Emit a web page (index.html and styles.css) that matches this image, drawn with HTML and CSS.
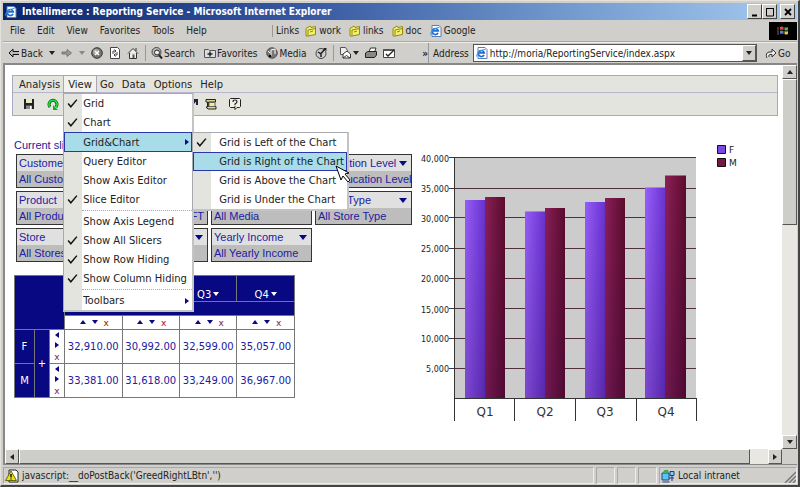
FILE: index.html
```html
<!DOCTYPE html>
<html lang="en">
<head>
<meta charset="utf-8">
<title>Intellimerce : Reporting Service</title>
<link rel="stylesheet" href="styles.css">
</head>
<body>
<svg class="defs" aria-hidden="true">
  <symbol id="ie" viewBox="0 0 12 12"><path d="M2 .5h7l2 2v9H2z" fill="#fff" stroke="#5a7cb8"/><path d="M8 7.800A3 3 0 1 1 8.200 5.800H3" fill="none" stroke="#1c6fd0" stroke-width="1.700"/><path d="M.5 9.500C0 7 6 2 9.500 2.500" fill="none" stroke="#3b9be8"/></symbol>
  <symbol id="folder" viewBox="0 0 12 12"><path d="M1 3.500L5 1l1 1.500L10.500 1.500v8L3 11H1z" fill="#f4ee70" stroke="#8c8a10"/><path d="M3 10.500V5l7.500-1.500M5 7l3-1" fill="none" stroke="#8c8a10"/></symbol>
  <symbol id="check" viewBox="0 0 10 10"><path d="M1 5l2.500 3L9 1.500" fill="none" stroke="#111" stroke-width="1.300"/></symbol>
</svg>
<div class="window">
  <header class="titlebar">
    <svg class="ico"><use href="#ie"/></svg>
    <h1>Intellimerce : Reporting Service - Microsoft Internet Explorer</h1>
    <button class="cap" aria-label="Minimize"><svg viewBox="0 0 10 10"><path d="M2 8.500h5" stroke="#000" stroke-width="2"/></svg></button>
    <button class="cap" aria-label="Maximize"><svg viewBox="0 0 10 10"><path d="M1 1.500h8M1.500 1v8h7V1" fill="none" stroke="#000"/></svg></button>
    <button class="cap close" aria-label="Close"><svg viewBox="0 0 10 10"><path d="M2 2l6 6M8 2L2 8" stroke="#000" stroke-width="1.800"/></svg></button>
  </header>

  <div class="row menus">
    <nav class="appmenu">
      <button>File</button><button>Edit</button><button>View</button><button>Favorites</button><button>Tools</button><button>Help</button>
    </nav>
    <nav class="links">
      <span>Links</span>
      <a href="#work"><svg class="ico"><use href="#folder"/></svg>work</a>
      <a href="#links"><svg class="ico"><use href="#folder"/></svg>links</a>
      <a href="#doc"><svg class="ico"><use href="#folder"/></svg>doc</a>
      <a href="#google"><svg class="ico"><use href="#ie"/></svg>Google</a>
    </nav>
    <div class="flag"><svg viewBox="0 0 14 12"><path d="M4 2q2-1 3.500 0v3Q6 4 4 5z" fill="#d8543c"/><path d="M8.500 2q2 1 3.500 0v3q-2 1-3.500 0z" fill="#5fae4a"/><path d="M4 6q2-1 3.500 0v3Q6 8 4 9z" fill="#4b83d8"/><path d="M8.500 6q2 1 3.500 0v3q-2 1-3.500 0z" fill="#e8c53c"/><path d="M1 3h2M1 5h2M1 7h2M1 9h2" stroke="#8a5a50"/></svg></div>
  </div>

  <div class="row tools">
    <div class="navtools">
      <button><svg class="ico" viewBox="0 0 12 12"><path d="M11 4.500H5V2L1 6l4 4V7.500h6" fill="#bbb" stroke="#111"/></svg>Back</button>
      <button class="drop" aria-label="Back history"><i class="caret"></i></button>
      <button class="drop" aria-label="Forward"><svg class="ico" viewBox="0 0 12 12"><path d="M1 5h5V2.500L10.500 6 6 9.500V7H1z" fill="#999" stroke="#777"/></svg></button>
      <button class="drop" aria-label="Forward history"><i class="caret dim"></i></button>
      <button aria-label="Stop"><svg class="ico" viewBox="0 0 12 12"><circle cx="6" cy="6" r="5.300" fill="#777" stroke="#333"/><circle cx="5" cy="5" r="3" fill="#aaa"/><path d="M4 4l4 4M8 4L4 8" stroke="#fff" stroke-width="1.300"/></svg></button>
      <button aria-label="Refresh"><svg class="ico" viewBox="0 0 12 12"><path d="M1.500.5h7l2 2v9h-9z" fill="#fff" stroke="#444"/><path d="M4 7V4h3M5.500 2.500L7 4 5.500 5.500M8 5v3H5M6.500 6.500L5 8l1.500 1.500" fill="none" stroke="#444"/></svg></button>
      <button aria-label="Home"><svg class="ico" viewBox="0 0 12 12"><path d="M1 6.500L6 1.500l5 5M9 4V1M2.500 6v5.500h7V6" fill="#eee" stroke="#333"/><path d="M5.500 11V7.500h2V11z" fill="#555"/></svg></button>
    </div>
    <div class="exptools">
      <button><svg class="ico" viewBox="0 0 12 12"><circle cx="5.500" cy="5" r="4.500" fill="#bbb" stroke="#444"/><circle cx="6" cy="5.500" r="2.500" fill="#eee" stroke="#222"/><path d="M8 8l3 3.500" stroke="#222" stroke-width="2"/></svg>Search</button>
      <button><svg class="ico" viewBox="0 0 12 12"><path d="M.5 10.500v-8h4l1 1h6v7z" fill="#ddd" stroke="#555"/><path d="M6 4.500v5M3.500 7h5" stroke="#222" stroke-width="1.500"/></svg>Favorites</button>
      <button><svg class="ico" viewBox="0 0 12 12"><circle cx="6" cy="6" r="5.300" fill="#777" stroke="#555"/><path d="M5 9V3l4-1v5M2 4l2 2" fill="none" stroke="#fff"/><circle cx="4" cy="9" r="1.300"/></svg>Media</button>
      <button aria-label="History"><svg class="ico" viewBox="0 0 12 12"><circle cx="6" cy="6.500" r="5" fill="#ccc" stroke="#444"/><path d="M6 6.500l4-4.500M3 5l3 2v3" fill="none" stroke="#222" stroke-width="1.500"/><path d="M8 1h3.500v3z" fill="#222"/></svg></button>
    </div>
    <div class="doctools">
      <button aria-label="Mail"><svg class="ico" viewBox="0 0 12 12"><path d="M1.500.5h5l2 3v4h-7z" fill="#eee" stroke="#555"/><path d="M4 7l4-3 3.500 3v4H4zM4 11l3.500-2.500L11 11" fill="#fff" stroke="#333"/></svg><i class="caret"></i></button>
      <button aria-label="Print"><svg class="ico" viewBox="0 0 12 12"><path d="M4 5l1.500-4H11L9.500 5" fill="#fff" stroke="#333"/><path d="M.5 6l2-1.500h9V8l-2 2.500h-9z" fill="#888" stroke="#222"/></svg></button>
      <button aria-label="Edit"><svg class="ico" viewBox="0 0 12 12"><path d="M.5 2.500h11v8H.5z" fill="#fff" stroke="#444"/><path d="M1 3h10" stroke="#555" stroke-width="2"/><path d="M3 7l2 2 6-6" fill="none" stroke="#222" stroke-width="1.300"/></svg></button>
      <span class="more">»</span>
    </div>
    <label for="address">Address</label>
    <div class="address">
      <svg class="ico"><use href="#ie"/></svg>
      <input id="address" type="text" value="http://moria/ReportingService/index.aspx">
      <button class="bevel" aria-label="Show addresses"><i class="caret"></i></button>
    </div>
    <button class="go"><svg class="ico" viewBox="0 0 12 12"><path d="M2 11Q0 6 4 5h3V2l4 4-4 4V7.500H5Q3 8 4 10" fill="#eee" stroke="#333"/></svg>Go</button>
  </div>

  <div class="viewport">
    <main class="page">
      <div class="panel">
        <nav class="menubar">
          <button>Analysis</button>
          <div class="holder">
            <button class="open">View</button>
            <ul class="menu main-menu">
              <li><svg><use href="#check"/></svg><span>Grid</span></li>
              <li><svg><use href="#check"/></svg><span>Chart</span></li>
              <li class="hot"><span>Grid&amp;Chart</span><i class="arrow"></i>
                <ul class="menu sub-menu">
                  <li><svg><use href="#check"/></svg><span>Grid is Left of the Chart</span></li>
                  <li class="hot"><span>Grid is Right of the Chart</span>
                    <svg class="cursor" viewBox="0 0 16 18"><path d="M1 1l13 7-4 1 5 6-2 2-5-6-2 4z" fill="#fff" stroke="#000"/></svg></li>
                  <li><span>Grid is Above the Chart</span></li>
                  <li><span>Grid is Under the Chart</span></li>
                </ul>
              </li>
              <li><span>Query Editor</span></li>
              <li><span>Show Axis Editor</span></li>
              <li><svg><use href="#check"/></svg><span>Slice Editor</span></li>
              <li class="group"><span>Show Axis Legend</span></li>
              <li><svg><use href="#check"/></svg><span>Show All Slicers</span></li>
              <li><svg><use href="#check"/></svg><span>Show Row Hiding</span></li>
              <li><svg><use href="#check"/></svg><span>Show Column Hiding</span></li>
              <li class="group"><span>Toolbars</span><i class="arrow"></i></li>
            </ul>
          </div>
          <button>Go</button><button>Data</button><button>Options</button><button>Help</button>
        </nav>
        <div class="iconbar">
          <button aria-label="Save"><svg viewBox="0 0 12 12"><path d="M1 1h10v10H1z" fill="#222"/><path d="M3 1h6v4H3z" fill="#e8e8c8"/><path d="M3 7.500h6V11H3z" fill="#888"/><path d="M7 8h1.500v3H7z" fill="#fff"/></svg></button>
          <button aria-label="Refresh data"><svg viewBox="0 0 12 12"><path d="M3 9A4 4 0 1 1 9 9" fill="none" stroke="#0a4a10" stroke-width="3"/><path d="M3 9A4 4 0 1 1 9 9" fill="none" stroke="#20e038" stroke-width="1.800"/><path d="M6 7v5h5z" fill="#10b028"/></svg></button>
          <button class="late" aria-label="Drill"><svg viewBox="0 0 12 12"><path d="M2 10l7-8M5 2h5v5" fill="none" stroke="#223" stroke-width="2"/></svg></button>
          <button aria-label="Script"><svg viewBox="0 0 12 12"><path d="M1 1.500h9.500V4H3.500v4.500H11V11H3L1 9h1.500V4H1z" fill="#ddd490" stroke="#222"/><path d="M4 4.500h6v4H4z" fill="#eee8b0" stroke="#665"/></svg></button>
          <button aria-label="Help topics"><svg viewBox="0 0 12 12"><path d="M1.500.5h9l1 1v7l-1 1H8L6 11.500V9.500H1.500l-1-1v-7z" fill="#f4f2dc" stroke="#222"/><path d="M4 4q0-2 2-2t2 1.500T6 6v1M6 7.800v1" fill="none" stroke="#224" stroke-width="1.200"/></svg></button>
        </div>
      </div>

      <div class="report">
        <section class="data">
          <h2>Current slicers</h2>
          <div class="slicers">
            <div class="slicer"><button>Customers</button><p>All Customers</p></div>
            <div class="slicer"></div>
            <div class="slicer"></div>
            <div class="slicer"><button>Education Level<i class="caret"></i></button><p>All Education Level</p></div>
            <div class="slicer"><button>Product</button><p>All Products</p></div>
            <div class="slicer"><button aria-label="Store size"><i class="caret"></i></button><p class="end">SQFT</p></div>
            <div class="slicer"><button aria-label="Media"><i class="caret"></i></button><p>All Media</p></div>
            <div class="slicer"><button>Store Type<i class="caret"></i></button><p>All Store Type</p></div>
            <div class="slicer"><button>Store</button><p>All Stores</p></div>
            <div class="slicer"><button aria-label="Slicer"><i class="caret"></i></button><p></p></div>
            <div class="slicer"><button>Yearly Income<i class="caret"></i></button><p>All Yearly Income</p></div>
          </div>

          <table class="cube">
            <colgroup><col class="c-name"><col class="c-tool"><col class="c-tool"><col class="c-val"><col class="c-val"><col class="c-val"><col class="c-val"></colgroup>
            <thead>
              <tr class="quarters"><th colspan="3" rowspan="3"></th><th></th><th></th><th>Q3<i class="caret"></i></th><th>Q4<i class="caret"></i></th></tr>
              <tr class="band"><th colspan="4"></th></tr>
              <tr class="sorts">
                <td><i class="caret up"></i><i class="caret"></i><b>x</b></td><td><i class="caret up"></i><i class="caret"></i><b>x</b></td><td><i class="caret up"></i><i class="caret"></i><b>x</b></td><td><i class="caret up"></i><i class="caret"></i><b>x</b></td>
              </tr>
            </thead>
            <tbody>
              <tr><th>F</th><th rowspan="2">+</th><td class="side"><div><i class="arrow left"></i><i class="arrow"></i><b>x</b></div></td><td>32,910.00</td><td>30,992.00</td><td>32,599.00</td><td>35,057.00</td></tr>
              <tr><th>M</th><td class="side"><div><i class="arrow left"></i><i class="arrow"></i><b>x</b></div></td><td>33,381.00</td><td>31,618.00</td><td>33,249.00</td><td>36,967.00</td></tr>
            </tbody>
          </table>
        </section>

        <svg class="chart" viewBox="0 0 330 285" role="img" aria-label="Quarterly values by gender">
          <defs>
            <linearGradient id="f"><stop offset="0" stop-color="#9a60fc"/><stop offset="1" stop-color="#6a34d4"/></linearGradient>
            <linearGradient id="m"><stop offset="0" stop-color="#8c2058"/><stop offset="1" stop-color="#5c0c2c"/></linearGradient>
            <linearGradient id="shade" x2="0" y2="1"><stop offset="0" stop-color="#200040" stop-opacity="0"/><stop offset="1" stop-color="#200040" stop-opacity=".25"/></linearGradient>
          </defs>
          <path d="M36 17h242v241H36z" fill="#cccccc"/>
          <path d="M31 17.500h247M31 48.500h247M31 77.500h247M31 108.500h247M31 138.500h247M31 168.500h247M31 198.500h247M31 228.500h247" stroke="#50303c"/>
          <g fill="url(#f)"><path d="M47 60h20v198H47z"/><path d="M107 71.500h20V258h-20z"/><path d="M167 62h20v196h-20z"/><path d="M227 47.500h20V258h-20z"/></g>
          <g fill="url(#m)"><path d="M67 57h20v201H67z"/><path d="M127 68h20v190h-20z"/><path d="M187 58h20v200h-20z"/><path d="M247 35.500h21V258h-21z"/></g>
          <g fill="url(#shade)"><path d="M47 60h20v-3h20v201H47z M107 71h20v-3h20v190h-40z M167 62h20v-4h20v200h-40z M227 47h20V36h21v222h-41z"/></g>
          <path d="M36.500 17v264M96.500 258v23M157.500 258v23M218.500 258v23M278.500 258v23M36 258.500h243" fill="none" stroke="#333"/>
          <g class="ticks"><text x="31" y="22">40,000</text><text x="31" y="52">35,000</text><text x="31" y="82">30,000</text><text x="31" y="112">25,000</text><text x="31" y="142">20,000</text><text x="31" y="173">15,000</text><text x="31" y="202">10,000</text><text x="31" y="232">5,000</text></g>
          <g class="cats"><text x="67" y="276">Q1</text><text x="127" y="276">Q2</text><text x="187" y="276">Q3</text><text x="248" y="276">Q4</text></g>
          <g stroke="#111"><path d="M299.500 5.500h8v8h-8z" fill="#7c48e4"/><path d="M299.500 18.500h8v8h-8z" fill="#741844"/></g>
          <g class="keys"><text x="311" y="13">F</text><text x="311" y="26">M</text></g>
        </svg>
      </div>
    </main>
    <div class="scroll vertical"><button class="bevel" aria-label="Scroll up"><i class="caret up"></i></button><div class="thumb bevel"></div><span></span><button class="bevel" aria-label="Scroll down"><i class="caret"></i></button></div>
    <div class="scroll horizontal"><button class="bevel" aria-label="Scroll left"><i class="arrow left"></i></button><div class="thumb bevel"></div><span></span><button class="bevel" aria-label="Scroll right"><i class="arrow"></i></button></div>
    <div class="corner"></div>
  </div>

  <footer class="status">
    <div class="message"><svg class="ico" viewBox="0 0 14 14"><path d="M4 1h7l2 2v10H4z" fill="#fff" stroke="#222"/><path d="M6 2l5.500 9.500H.5z" fill="#e8e020" stroke="#6a6800"/><path d="M6 5v3.500M6 9.500v1" stroke="#000" stroke-width="1.300"/></svg>javascript:__doPostBack('GreedRightLBtn','')</div>
    <div></div><div></div><div></div>
    <div class="zone"><svg class="ico" viewBox="0 0 14 14"><path d="M1 4h7v7H1zM1.500 13h7" fill="#58c8f0" stroke="#224488"/><path d="M9 2.500h4v4H9zM8 9h5M11 7v5" fill="#7ad0f0" stroke="#223a80"/><path d="M2 3q2-4 6-1L6 4z" fill="#38b048"/></svg>Local intranet
      <svg class="grip" viewBox="0 0 12 12"><path d="M1 12L12 1M5 12l7-7M9 12l3-3" stroke="#777" stroke-width="1.500"/></svg></div>
  </footer>
</div>
</body>
</html>
```
FILE: styles.css
```css
* { box-sizing: border-box; }
:root {
  --chrome: #d0cfcb;
  --navy: #080882;
  --ink: #2020a0;
}
body {
  margin: 0;
  font-family: "DejaVu Sans Condensed", "DejaVu Sans", sans-serif;
  font-size: 10px;
  color: #222;
}
button {
  font: inherit;
  color: inherit;
  background: none;
  border: 0;
  padding: 0;
  display: flex;
  align-items: center;
}
h1, h2, p, ul { margin: 0; padding: 0; font-size: inherit; }
.defs { position: absolute; width: 0; height: 0; }
.ico { width: 12px; height: 12px; flex: none; }

.caret {
  flex: none;
  display: inline-block;
  border: solid transparent;
  border-width: 4px 3px 0;
  border-top-color: currentColor;
}
.caret.up { border-width: 0 3px 4px; border-bottom-color: currentColor; }
.caret.dim { color: #888; }
.arrow {
  flex: none;
  display: inline-block;
  border: solid transparent;
  border-width: 3px 0 3px 4px;
  border-left-color: currentColor;
}
.arrow.left { border-width: 3px 4px 3px 0; border-right-color: currentColor; }
.bevel {
  background: var(--chrome);
  border: 1px solid #fff;
  border-right-color: #555;
  border-bottom-color: #555;
  justify-content: center;
}

.window {
  height: 100vh;
  display: flex;
  flex-direction: column;
  background: var(--chrome);
  border: 1px solid #e4e2da;
  border-right: 2px solid #444;
  border-bottom: 2px solid #444;
  padding: 2px 1px 1px 2px;
}

.titlebar {
  height: 17px;
  flex: none;
  display: flex;
  align-items: center;
  padding: 0 2px;
  background: linear-gradient(90deg, #0a246a, #3a5ca4 40%, #7098cc 70%, #a6caf0);
  color: #fff;
}
.titlebar h1 { flex: 1; margin-left: 5px; font-weight: bold; white-space: nowrap; }
.cap {
  width: 15px;
  height: 15px;
  justify-content: center;
  background: var(--chrome);
  border: 1px solid #fff;
  border-right-color: #444;
  border-bottom-color: #444;
}
.cap svg { width: 10px; height: 10px; flex: none; }
.cap.close { margin-left: 3px; }

.row { display: flex; align-items: center; flex: none; white-space: nowrap; }
.menus { height: 22px; border-bottom: 1px solid #aaa8a0; }
.appmenu { width: 269px; display: flex; gap: 12px; padding-left: 7px; }
.links { flex: 1; display: flex; align-items: center; gap: 8px; padding-left: 3px; border-left: 1px solid #999; }
.links span { margin-right: -2px; }
.links a { display: flex; align-items: center; gap: 2px; color: inherit; text-decoration: none; }
.flag { width: 28px; height: 18px; background: #000; display: flex; justify-content: center; align-items: center; }
.flag svg { width: 14px; height: 12px; }

.tools { height: 21px; border-top: 1px solid #f0eee8; }
.tools > div { display: flex; align-items: center; }
.navtools { width: 143px; height: 16px; gap: 6px; padding-left: 5px; border-right: 1px solid #999; }
.navtools button { gap: 1px; }
.exptools { width: 188px; height: 16px; gap: 9px; padding-left: 5px; border-right: 1px solid #999; }
.exptools button { gap: 1px; }
.doctools { width: 95px; height: 20px; gap: 6px; padding-left: 5px; border-right: 1px solid #999; }
.doctools button { gap: 2px; }
.more { margin-left: auto; font-weight: bold; }
.tools label { padding: 0 4px; }
.tools .address { flex: 1; height: 18px; background: #fff; border: 1px solid #555; padding-left: 2px; gap: 2px; }
.address input { flex: 1; min-width: 0; border: 0; padding: 0; outline: 0; font: inherit; color: inherit; background: none; }
.address .bevel { width: 14px; height: 16px; }
.go { width: 40px; gap: 1px; padding-left: 8px; }

.viewport {
  flex: 1;
  min-height: 0;
  display: grid;
  grid-template: minmax(0, 1fr) 15px / minmax(0, 1fr) 15px;
  border: 1px solid #888;
  border-width: 2px 0 1px 2px;
}
.page {
  background: #fff;
  padding: 10px 4px 0 7px;
  font-family: "DejaVu Sans", sans-serif;
}
.scroll { display: flex; background: #e8e7e2; }
.scroll .thumb { background: #cdcdca; }
.scroll span { flex: 1; }
.scroll .bevel { flex: none; }
.vertical { flex-direction: column; }
.vertical button { height: 14px; }
.vertical .thumb { height: 38%; }
.horizontal button { width: 14px; }
.horizontal .thumb.thumb { flex: 40; }
.corner { background: var(--chrome); }

.panel { border: 1px solid #aaa6c4; background: #e4e4de; }
.menubar { display: flex; height: 17px; padding-left: 2px; border-bottom: 1px solid #b8b4cc; }
.menubar button { height: 16px; padding: 0 4px; }
.menubar .open { background: #f2f2ee; border: 0; outline: 1px solid #aaa6b8; }
.holder { position: relative; }
.iconbar { height: 22px; display: flex; align-items: center; gap: 12px; padding-left: 10px; }
.iconbar svg { width: 12px; height: 12px; }
.iconbar .late { margin-left: 116px; margin-right: -6px; }

.menu {
  position: absolute;
  z-index: 2;
  list-style: none;
  background: linear-gradient(90deg, #e4e4de 18px, #fff 18px);
  border: 1px solid #a8a8b0;
  border-right: 2px solid #c4c4c4;
  border-bottom: 2px solid #c4c4c4;
}
.main-menu { top: 17px; left: -1px; width: 131px; }
.menu li { position: relative; display: flex; align-items: center; height: 19px; padding-left: 19px; white-space: nowrap; }
.menu li > svg:first-child { position: absolute; left: 3px; width: 11px; height: 11px; }
.menu li.hot { background: #a8dce8; outline: 1px solid #2838a8; outline-offset: -1px; height: 20px; }
.menu .arrow { color: var(--navy); margin-left: auto; margin-right: 3px; }
.menu .group { margin-top: 3px; }
.menu .group::before { content: ""; position: absolute; top: -2px; left: 18px; right: 0; border-top: 1px dotted #aaa; }
.sub-menu { top: 0; left: 100%; width: 157px; }
.sub-menu li { padding-left: 26px; }
.sub-menu li.hot { height: 19px; }
.menu .cursor { position: absolute; width: 16px; height: 18px; left: 142px; top: 13px; z-index: 3; }

.report { display: flex; }
.data { flex: none; width: 400px; padding: 23px 0 0 2px; }
.data h2, .slicer { font-family: "Liberation Sans", Arial, sans-serif; font-size: 11px; font-weight: normal; color: var(--ink); }
.data h2 { line-height: 13px; }
.slicers { display: grid; grid-template-columns: 76px 113px 101px 97px; gap: 3px; margin: 2px 0 0 2px; }
.slicer { border: 1px solid #333; height: 34px; white-space: nowrap; line-height: 16px; }
.slicer button { width: 100%; height: 16px; padding: 0 4px 0 2px; justify-content: space-between; background: #e0e0e0; }
.slicer .caret { border-width: 5px 4px 0; color: var(--navy); margin-left: auto; }
.slicer p { height: 16px; padding-left: 2px; background: #bdbdbd; }
.slicer .end { text-align: right; padding-right: 3px; }

.cube { border-collapse: collapse; table-layout: fixed; width: 281px; margin-top: 13px; color: var(--ink); }
.c-name { width: 20px; }
.c-tool { width: 15px; }
.cube th, .cube td { border: 1px solid #777; padding: 0; text-align: center; font-weight: normal; }
.cube th { background: var(--navy); color: #fff; }
.cube .caret { margin: 0 0 2px 2px; }
.cube tr { height: 34px; }
.cube .quarters { height: 26px; }
.quarters th { vertical-align: bottom; line-height: 13px; }
.cube .band { height: 14px; }
.cube .sorts { height: 14px; color: var(--navy); }
.sorts td { line-height: 10px; }
.sorts .caret + .caret { margin: 0 6px 2px; }
.cube b { font-size: 9px; font-weight: normal; color: #8a2020; line-height: 10px; }
.side div { display: flex; flex-direction: column; align-items: center; gap: 4px; color: var(--navy); }

.chart { flex: none; width: 330px; height: 285px; margin: 24px 0 0 6px; }
.ticks { font-size: 8px; text-anchor: end; fill: #222; }
.cats { font-size: 12px; text-anchor: middle; fill: #333; }
.keys { font-size: 9px; fill: #222; }

.status { flex: none; display: flex; gap: 2px; height: 19px; padding-top: 2px; }
.status div { width: 19px; display: flex; align-items: center; border: 1px solid #aaa8a0; border-right-color: #eee; border-bottom-color: #eee; }
.status .ico { width: 14px; height: 14px; }
.status .message { flex: 1; gap: 3px; padding-left: 1px; }
.status .zone { width: 138px; gap: 3px; padding-left: 1px; }
.grip { width: 12px; height: 12px; margin-left: auto; align-self: flex-end; }
```
